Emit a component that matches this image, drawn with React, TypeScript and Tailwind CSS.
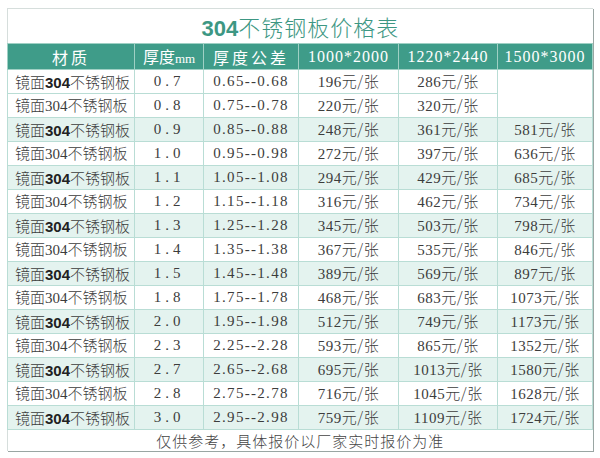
const rows = [
  ["0.7", "0.65--0.68", "196", "286", ""],
  ["0.8", "0.75--0.78", "220", "320", ""],
  ["0.9", "0.85--0.88", "248", "361", "581"],
  ["1.0", "0.95--0.98", "272", "397", "636"],
  ["1.1", "1.05--1.08", "294", "429", "685"],
  ["1.2", "1.15--1.18", "316", "462", "734"],
  ["1.3", "1.25--1.28", "345", "503", "798"],
  ["1.4", "1.35--1.38", "367", "535", "846"],
  ["1.5", "1.45--1.48", "389", "569", "897"],
  ["1.8", "1.75--1.78", "468", "683", "1073"],
  ["2.0", "1.95--1.98", "512", "749", "1173"],
  ["2.3", "2.25--2.28", "593", "865", "1352"],
  ["2.7", "2.65--2.68", "695", "1013", "1580"],
  ["2.8", "2.75--2.78", "716", "1045", "1628"],
  ["3.0", "2.95--2.98", "759", "1109", "1724"],
];

const serif = "font-['Liberation_Serif','Noto_Sans_CJK_SC',serif]";
const cell = "border border-[#b9ddd5] text-center";

function Price({ v }: { v: string }) {
  return (
    <span className="tracking-[0.5px]">
      <span className={serif}>{v}</span>
      <span className="font-['Noto_Sans_CJK_SC',sans-serif] font-light">元/张</span>
    </span>
  );
}

export default function App() {
  return (
    <div className="w-[600px] h-[458px] bg-white pt-[8px] pl-[7px]">
      <table className="table-fixed border-collapse w-[585px] text-[#3c3c3c] text-[15px] leading-none border-l border-t border-[#d6dedc] shadow-[1px_1px_0_#9aa6a3]">
        <colgroup>
          <col className="w-[127px]" />
          <col className="w-[69px]" />
          <col className="w-[95px]" />
          <col className="w-[100px]" />
          <col className="w-[99px]" />
          <col className="w-[95px]" />
        </colgroup>
        <thead>
          <tr className="h-[35px]">
            <th colSpan={6} className="text-center font-normal text-[#3d9783] text-[22px] pt-[2px]">
              <span className="font-['Liberation_Sans',sans-serif] font-bold">304</span>
              <span className="font-['Noto_Sans_CJK_SC',sans-serif] font-light tracking-[1px]">不锈钢板价格表</span>
            </th>
          </tr>
          <tr className="h-[26px] bg-[#3f9c89] text-white text-[16px] font-normal">
            <th className={"border border-[#9fd0c4] font-normal font-['Noto_Sans_CJK_SC',sans-serif] font-light tracking-[3px]"}>材质</th>
            <th className="border border-[#9fd0c4] font-normal font-['Noto_Sans_CJK_SC',sans-serif] font-light">
              厚度<span className={serif + " text-[13px]"}>mm</span>
            </th>
            <th className="border border-[#9fd0c4] font-normal font-['Noto_Sans_CJK_SC',sans-serif] font-light tracking-[3px]">厚度公差</th>
            <th className={"border border-[#9fd0c4] font-normal tracking-[1px] " + serif}>1000*2000</th>
            <th className={"border border-[#9fd0c4] font-normal tracking-[1px] " + serif}>1220*2440</th>
            <th className={"border border-[#9fd0c4] font-normal tracking-[1px] " + serif}>1500*3000</th>
          </tr>
        </thead>
        <tbody>
          {rows.map((r, i) => {
            const tint = i % 2 === 0 && i > 0;
            return (
              <tr key={r[0]} className={"h-[24px] " + (tint ? "bg-[#e4f3ef]" : "bg-white")}>
                <td className="border border-[#b9ddd5] text-left pl-[7px] font-['Noto_Sans_CJK_SC',sans-serif] font-light">
                  镜面
                  {i % 2 === 0 ? (
                    <span className="font-['Liberation_Sans',sans-serif] font-bold text-[#222]">304</span>
                  ) : (
                    <span className={serif}>304</span>
                  )}
                  不锈钢板
                </td>
                <td className={cell + " tracking-[4px] " + serif}>{r[0]}</td>
                <td className={cell + " tracking-[1.3px] " + serif}>{r[1]}</td>
                <td className={cell}>
                  <Price v={r[2]} />
                </td>
                <td className={cell}>
                  <Price v={r[3]} />
                </td>
                {i === 0 ? (
                  <td rowSpan={2} className="border border-[#b9ddd5] bg-white" />
                ) : i === 1 ? null : (
                  <td className={cell}>
                    <Price v={r[4]} />
                  </td>
                )}
              </tr>
            );
          })}
          <tr className="h-[21px]">
            <td colSpan={6} className="border-t border-[#b9ddd5] text-center font-['Noto_Sans_CJK_SC',sans-serif] font-light text-[15px] tracking-[1px] text-[#444]">
              仅供参考，具体报价以厂家实时报价为准
            </td>
          </tr>
        </tbody>
      </table>
    </div>
  );
}
